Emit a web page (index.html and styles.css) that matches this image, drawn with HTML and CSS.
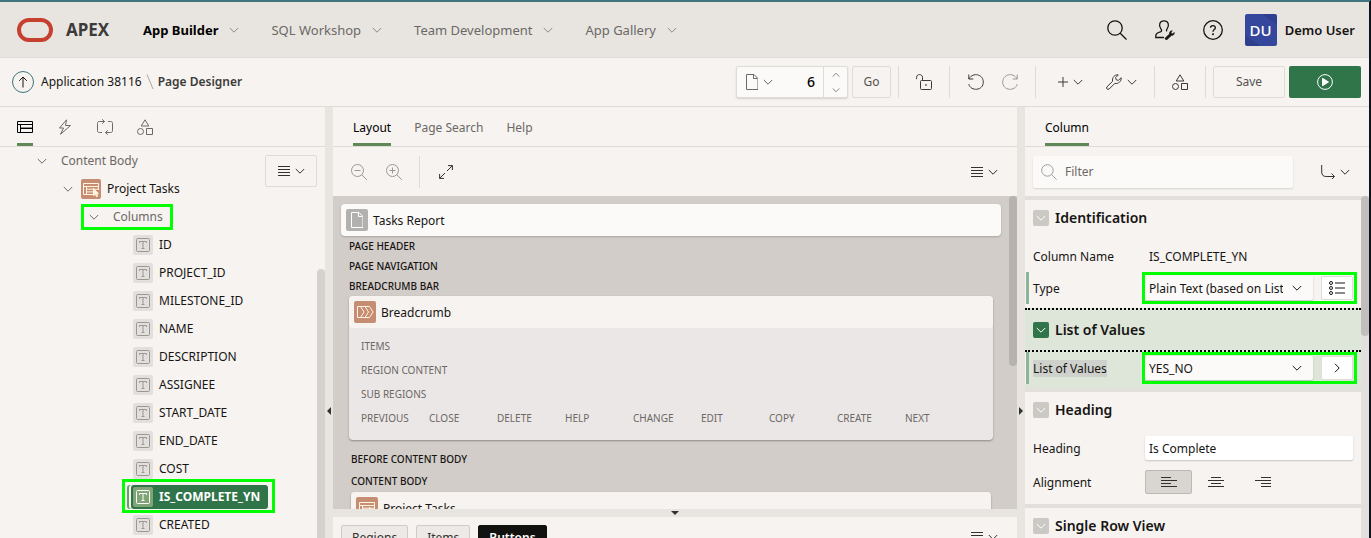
FILE: index.html
```html
<!DOCTYPE html>
<html lang="en">
<head>
<meta charset="utf-8">
<title>Page Designer</title>
<link rel="stylesheet" href="styles.css">
</head>
<body>
<svg class="defs" width="0" height="0" aria-hidden="true">
  <symbol id="chev" viewBox="0 0 10 10"><path d="M.8 3 5 7.200 9.200 3"/></symbol>
  <symbol id="menu" viewBox="0 0 12 12"><path d="M0 1.500h12M0 4.500h12M0 7.500h12M0 10.500h12"/></symbol>
  <symbol id="search" viewBox="0 0 20 20"><circle cx="8" cy="8" r="7.200"/><path d="m13.200 13.200 6.300 6.300"/></symbol>
  <symbol id="shapes" viewBox="0 0 16 16"><path d="M8 .8 11.800 7H4.200zM9.500 9.500h6v6h-6z"/><circle cx="3.500" cy="12.500" r="3"/></symbol>
  <symbol id="page" viewBox="0 0 12 16"><path d="M.5.5h7.500l4 4v11H.5zM7.500.5v4h4"/></symbol>
  <symbol id="text" viewBox="0 0 20 20"><rect x="3.500" y="3.500" width="13" height="13" rx="1"/><path d="M6.500 8V6.500h7V8M10 6.500v7M8.500 13.500h3"/></symbol>
  <symbol id="report" viewBox="0 0 20 20"><path d="M17.500 11V4.500h-15v11H13M2.500 7.500h15M5.500 7.500v8M5.500 10.200h12M5.500 12.900h7.500"/><path class="solid" d="m12.500 9.500 5 5.200-2 .2 1 2.300-1 .5-1.100-2.400-1.900 1.200z"/></symbol>
</svg>

<header class="topbar">
  <a class="brand" href="#"><svg width="36" height="24" viewBox="0 0 36 24"><rect x="2" y="2" width="32" height="20" rx="10" fill="none" stroke="#c73f2e" stroke-width="4"/></svg><span>APEX</span></a>
  <nav class="mainnav">
    <a class="current" href="#">App Builder<svg class="i chev"><use href="#chev"/></svg></a>
    <a href="#">SQL Workshop<svg class="i chev"><use href="#chev"/></svg></a>
    <a href="#">Team Development<svg class="i chev"><use href="#chev"/></svg></a>
    <a href="#">App Gallery<svg class="i chev"><use href="#chev"/></svg></a>
  </nav>
  <div class="tools">
    <button aria-label="Search"><svg class="i s20"><use href="#search"/></svg></button>
    <button aria-label="Administration"><svg class="i s20" viewBox="0 0 20 20"><path d="M9 17.500H.8v-2c.2-2 2-3 4.700-3.700 1.600-.5 1.300-1.800.4-2.900C3.300 5.500 4.500.9 9 .9s5.700 4.600 3.100 8c-.8 1-.9 1.900 0 2.400"/><path class="wrench" d="m10.200 18 4.300-4.100c-.4-1.800 1-3.400 2.800-3.100l-1.200 1.400.4 1.300 1.300.3 1.400-1.400c.6 1.700-1.100 3.400-2.800 3l-4.200 4.100c-1.300.7-2.700-.6-2-1.500z"/></svg></button>
    <button aria-label="Help"><svg class="i s20" viewBox="0 0 20 20"><circle cx="10" cy="10" r="9.300"/><path d="M7.500 7.800C7.600 4.800 12.500 5 12.400 7.900c-.1 1.700-2.400 1.700-2.400 3.900"/><circle class="solid" cx="10" cy="14.200" r=".4"/></svg></button>
    <button class="user"><span class="avatar">DU</span>Demo User</button>
  </div>
</header>

<div class="toolbar">
  <nav class="crumbs">
    <a class="up" href="#" aria-label="Up"><svg class="i s12" viewBox="0 0 12 12"><path d="M6 11.500V1M2.200 4.800 6 1l3.800 3.800"/></svg></a>
    <a href="#">Application 38116</a>
    <svg class="i slash" viewBox="0 0 8 16"><path d="m1 .5 6 14.500"/></svg>
    <strong>Page Designer</strong>
  </nav>
  <div class="pagepick">
    <button class="pick" aria-label="Choose page"><svg class="i page"><use href="#page"/></svg><svg class="i s10"><use href="#chev"/></svg></button>
    <input aria-label="Page" value="6">
    <span class="spin"><button aria-label="Next page"><svg class="i flip"><use href="#chev"/></svg></button><button aria-label="Previous page"><svg class="i"><use href="#chev"/></svg></button></span>
  </div>
  <button class="box go">Go</button>
  <div class="grp lock"><button aria-label="Unlocked"><svg class="i s16" viewBox="0 0 16 16"><rect x="4.500" y="6.500" width="11" height="9" rx="1"/><path d="M6.500 6.500V3.200C6.300-.3.600-.3.600 3.200v2"/><circle class="solid" cx="10" cy="11" r=".4"/></svg></button></div>
  <div class="grp undo"><button aria-label="Undo"><svg class="i s16" viewBox="0 0 16 16"><path d="M.8.500v4.500h4.500M1 4.800C5-2.200 15.300.2 15.300 8.100c0 8.800-12.600 9.600-14.500 2"/></svg></button><button class="off" aria-label="Redo"><svg class="i s16" viewBox="0 0 16 16"><path d="M15.200.500v4.500h-4.500M15 4.800C11-2.200.7.2.7 8.100c0 8.800 12.600 9.600 14.500 2"/></svg></button></div>
  <div class="grp make"><button aria-label="Create"><svg class="i s10" viewBox="0 0 10 10"><path d="M5 0v10M0 5h10"/></svg><svg class="i s10"><use href="#chev"/></svg></button><button aria-label="Utilities"><svg class="i s16" viewBox="0 0 16 16"><path d="M.9 12.900 6.600 7.300C5.800 3.800 8.700.3 12.300.9L9.600 3.600l.6 2.200 2.200.6L15.100 3.700c.6 3.600-2.800 6.400-6.300 5.700l-5.700 5.700c-1.600 1-3.200-.7-2.200-2.200z"/></svg><svg class="i s10"><use href="#chev"/></svg></button></div>
  <div class="grp comp"><button aria-label="Shared Components"><svg class="i s16"><use href="#shapes"/></svg></button></div>
  <div class="grp save"><button class="box">Save</button><button class="run" aria-label="Save and run page"><svg class="i s16" viewBox="0 0 16 16"><circle cx="8" cy="8" r="7.400"/><path class="solid" d="M5.500 4.300 11.500 8l-6 3.700z"/></svg></button></div>
</div>

<main class="workspace">
  <section class="pane left">
    <div class="tabs icons" role="tablist">
      <button class="tab on" role="tab" aria-label="Rendering"><svg class="i s16" viewBox="0 0 16 16"><path d="M.5 2.500h15v11H.5zM.5 5.500h15M3.500 5.500v8M3.500 9.500h12"/><path stroke="#888" d="M4 8.500h11"/></svg></button>
      <button class="tab" role="tab" aria-label="Dynamic Actions"><svg class="i s16" viewBox="0 0 16 16"><path d="M9.500.8 2.500 9h4l-3 6.300L13.500 6.500h-5z"/></svg></button>
      <button class="tab" role="tab" aria-label="Processing"><svg class="i s16" viewBox="0 0 16 16"><path d="M7.500 2.500h-5c-1.500 0-2 .5-2 2v7c0 1.500.5 2 2 2H5M5.200.3l2.300 2.200-2.300 2.200M8.500 13.500h5c1.500 0 2-.5 2-2v-7c0-1.500-.5-2-2-2H11M10.800 11.300l-2.300 2.200 2.300 2.200"/></svg></button>
      <button class="tab" role="tab" aria-label="Shared Components"><svg class="i s16"><use href="#shapes"/></svg></button>
    </div>
    <div class="treewrap">
      <ul class="tree">
        <li class="l1 dim"><svg class="i s10"><use href="#chev"/></svg>Content Body</li>
        <li class="l2"><svg class="i s10"><use href="#chev"/></svg><svg class="i tile rust"><use href="#report"/></svg>Project Tasks</li>
        <li class="l3 dim"><svg class="i s10"><use href="#chev"/></svg><span>Columns</span><i class="mark"></i></li>
        <li class="l4"><svg class="i tile"><use href="#text"/></svg>ID</li>
        <li class="l4"><svg class="i tile"><use href="#text"/></svg>PROJECT_ID</li>
        <li class="l4"><svg class="i tile"><use href="#text"/></svg>MILESTONE_ID</li>
        <li class="l4"><svg class="i tile"><use href="#text"/></svg>NAME</li>
        <li class="l4"><svg class="i tile"><use href="#text"/></svg>DESCRIPTION</li>
        <li class="l4"><svg class="i tile"><use href="#text"/></svg>ASSIGNEE</li>
        <li class="l4"><svg class="i tile"><use href="#text"/></svg>START_DATE</li>
        <li class="l4"><svg class="i tile"><use href="#text"/></svg>END_DATE</li>
        <li class="l4"><svg class="i tile"><use href="#text"/></svg>COST</li>
        <li class="l4 sel"><span class="pill"><svg class="i tile"><use href="#text"/></svg>IS_COMPLETE_YN</span><i class="mark"></i></li>
        <li class="l4"><svg class="i tile"><use href="#text"/></svg>CREATED</li>
      </ul>
      <button class="box treemenu" aria-label="Tree menu"><svg class="i s12"><use href="#menu"/></svg><svg class="i s10"><use href="#chev"/></svg></button>
      <div class="thumb"></div>
    </div>
  </section>

  <div class="split"><svg class="grip" width="4" height="8" viewBox="0 0 4 8"><path d="M4 0v8L0 4z"/></svg></div>

  <section class="pane center">
    <div class="tabs" role="tablist">
      <button class="tab on" role="tab">Layout</button><button class="tab" role="tab">Page Search</button><button class="tab" role="tab">Help</button>
    </div>
    <div class="subbar">
      <button class="off" aria-label="Zoom out"><svg class="i s16" viewBox="0 0 16 16"><circle cx="6.500" cy="6.500" r="6"/><path d="m10.800 10.800 5 5M3.500 6.500h6"/></svg></button>
      <button class="off" aria-label="Zoom in"><svg class="i s16" viewBox="0 0 16 16"><circle cx="6.500" cy="6.500" r="6"/><path d="m10.800 10.800 5 5M3.500 6.500h6M6.500 3.500v6"/></svg></button>
      <span class="rule"></span>
      <button aria-label="Expand"><svg class="i s14" viewBox="0 0 14 14"><path d="M9 .6h4.400V5M13.400.6 8 6M5 13.400H.6V9M.6 13.400 6 8"/></svg></button>
      <button class="last" aria-label="Layout menu"><svg class="i s12"><use href="#menu"/></svg><svg class="i s10"><use href="#chev"/></svg></button>
    </div>
    <div class="canvas">
      <div class="card"><svg class="i badge grey" viewBox="-5 -3 22 22"><use href="#page" width="12" height="16"/></svg><span>Tasks Report</span></div>
      <div class="pos">
        <h3>PAGE HEADER</h3><h3>PAGE NAVIGATION</h3><h3>BREADCRUMB BAR</h3>
        <article class="region">
          <div class="rhead"><svg class="i badge rust" viewBox="0 0 22 22"><path d="M3.500 5.500h12l3.500 5.500-3.500 5.500h-12zM6.500 5.500 10 11l-3.500 5.500M11 5.500l3.500 5.500-3.500 5.500"/></svg><span>Breadcrumb</span></div>
          <div class="rbody">
            <p>ITEMS</p><p>REGION CONTENT</p><p>SUB REGIONS</p>
            <div class="slots"><span>PREVIOUS</span><span>CLOSE</span><span>DELETE</span><span>HELP</span><span>CHANGE</span><span>EDIT</span><span>COPY</span><span>CREATE</span><span>NEXT</span></div>
          </div>
        </article>
        <div class="content">
          <h3>BEFORE CONTENT BODY</h3><h3>CONTENT BODY</h3>
          <article class="region"><div class="rhead"><svg class="i badge rust" viewBox="-1 -1 22 22"><use href="#report" width="20" height="20"/></svg><span>Project Tasks</span></div></article>
        </div>
      </div>
      <div class="thumb"></div>
    </div>
    <div class="hsplit"><svg class="grip" width="8" height="4" viewBox="0 0 8 4"><path d="M0 0h8L4 4z"/></svg></div>
    <div class="gallery">
      <button>Regions</button><button>Items</button><button class="on">Buttons</button>
      <button class="plain last" aria-label="Gallery menu"><svg class="i s12"><use href="#menu"/></svg><svg class="i s10"><use href="#chev"/></svg></button>
    </div>
  </section>

  <div class="split"><svg class="grip" width="4" height="8" viewBox="0 0 4 8"><path d="M0 0v8l4-4z"/></svg></div>

  <section class="pane right">
    <div class="tabs" role="tablist"><button class="tab on" role="tab">Column</button></div>
    <div class="subbar">
      <label class="filter"><svg class="i s16" viewBox="0 0 20 20"><use href="#search"/></svg><input type="text" placeholder="Filter" aria-label="Filter"></label>
      <button class="last" aria-label="Go to group"><svg class="i s14" viewBox="0 0 14 14"><path d="M.7 0v7c0 3 1.500 4.500 4.500 4.500h8M10.500 8.500l3 3-3 3"/></svg><svg class="i s10"><use href="#chev"/></svg></button>
    </div>
    <div class="props">
      <div class="groups">
        <section class="group">
          <h2><button aria-label="Toggle Identification"><svg class="i s10"><use href="#chev"/></svg></button>Identification</h2>
          <div class="fields">
            <div class="field"><span>Column Name</span><span class="value">IS_COMPLETE_YN</span></div>
            <div class="field changed"><label for="type">Type</label><div class="control marked"><select id="type"><option>Plain Text (based on List of Values)</option></select><svg class="i s10 arrow"><use href="#chev"/></svg><button aria-label="Quick pick"><svg class="i s16" viewBox="0 0 16 14"><circle cx="2" cy="2" r="1.500"/><circle cx="2" cy="7" r="1.500"/><circle cx="2" cy="12" r="1.500"/><path d="M6 2h10M6 7h10M6 12h10"/></svg></button></div></div>
          </div>
        </section>
        <section class="group active">
          <h2><button aria-label="Toggle List of Values"><svg class="i s10"><use href="#chev"/></svg></button>List of Values</h2>
          <div class="fields">
            <div class="field changed"><label for="lov"><mark>List of Values</mark></label><div class="control marked"><select id="lov"><option>YES_NO</option></select><svg class="i s10 arrow"><use href="#chev"/></svg><button aria-label="Go to List of Values"><svg class="i s10" viewBox="0 0 10 10"><path d="m3 .8 4.200 4.200L3 9.200"/></svg></button></div></div>
          </div>
        </section>
        <section class="group">
          <h2><button aria-label="Toggle Heading"><svg class="i s10"><use href="#chev"/></svg></button>Heading</h2>
          <div class="fields roomy">
            <div class="field"><label for="heading">Heading</label><div class="control"><input id="heading" value="Is Complete"></div></div>
            <div class="field"><span>Alignment</span><div class="align"><button class="on" aria-label="Start"><svg class="i s16" viewBox="0 0 16 12"><path d="M0 1.500h10M0 4.500h16M0 7.500h10M0 10.500h16"/></svg></button><button aria-label="Center"><svg class="i s16" viewBox="0 0 16 12"><path d="M3 1.500h10M0 4.500h16M3 7.500h10M0 10.500h16"/></svg></button><button aria-label="End"><svg class="i s16" viewBox="0 0 16 12"><path d="M6 1.500h10M0 4.500h16M6 7.500h10M6 10.500h10"/></svg></button></div></div>
          </div>
        </section>
        <section class="group">
          <h2><button aria-label="Toggle Single Row View"><svg class="i s10"><use href="#chev"/></svg></button>Single Row View</h2>
        </section>
      </div>
      <div class="thumb"></div>
    </div>
  </section>
</main>
</body>
</html>
```
FILE: styles.css
```css
* { box-sizing: border-box; }
body {
  margin: 0;
  height: 100vh;
  overflow: hidden;
  display: flex;
  flex-direction: column;
  border-top: 2px solid #41757f;
  border-right: 2px solid #10121c;
  background: #f6f3f0;
  color: #161513;
  font: 12px/16px "Noto Sans", "Open Sans", sans-serif;
}
button, input, select { font: inherit; color: inherit; }
button { border: 0; padding: 0; background: none; display: inline-flex; align-items: center; justify-content: center; gap: 5px; }
a { color: inherit; text-decoration: none; }
h2, h3, p, ul { margin: 0; padding: 0; }
.defs { position: absolute; }
.i { width: 10px; height: 10px; flex: none; fill: none; stroke: currentColor; stroke-width: 1; }
.i .solid, .solid { fill: currentColor; }
.wrench { fill: currentColor; stroke-width: 0.6; }
.s10 { width: 10px; height: 10px; }
.s12 { width: 12px; height: 12px; }
.s14 { width: 14px; height: 14px; }
.s16 { width: 16px; height: 16px; }
.s20 { width: 20px; height: 20px; }
.last { margin-left: auto; }
.off { color: #9b9894; }

.topbar { height: 56px; flex: none; display: flex; align-items: center; padding: 0 14px 0 17px; background: #e8e5e1; border-bottom: 1px solid #dfdbd7; }
.brand { display: flex; align-items: center; gap: 13px; width: 126px; font-size: 17px; font-weight: 700; color: #3d3b39; }
.mainnav { display: flex; gap: 32px; font-size: 13px; color: #6b6865; }
.mainnav a { display: flex; align-items: center; gap: 11px; }
.mainnav .current { font-weight: 700; color: #000; }
.mainnav .chev { color: #8b8884; }
.tools { margin-left: auto; display: flex; align-items: center; gap: 28px; }
.tools .s20 { stroke-width: 1.3; }
.user { gap: 8px; margin-left: -6px; font-size: 13px; font-weight: 600; }
.avatar { width: 32px; height: 32px; border-radius: 2px; background: linear-gradient(35deg, #2f3f8c 20%, #35479c 21%, #35479c 80%, #2f3f8f 81%); color: #fff; font-size: 15px; font-weight: 500; line-height: 32px; }

.toolbar { height: 49px; flex: none; display: flex; align-items: center; padding: 0 8px 0 12px; border-bottom: 1px solid #dfdbd7; color: #3d3b39; }
.toolbar button, .box { height: 32px; }
.crumbs { display: flex; align-items: center; gap: 4px; margin-right: auto; color: #161513; }
.crumbs strong { color: #3d3b39; font-weight: 600; }
.up { width: 22px; height: 22px; margin-right: 3px; border: 1px solid #41757f; border-radius: 50%; display: grid; place-items: center; }
.slash { width: 8px; height: 16px; color: #aaa7a3; }
.box { border: 1px solid #dfdcd8; border-radius: 2px; color: #55524f; }
.pagepick { width: 112px; height: 32px; display: flex; background: #fbfaf8; border: 1px solid #dfdcd8; border-radius: 2px; box-shadow: 0 1px 2px #0002; }
.pagepick .pick { width: 44px; height: 30px; color: #6b6865; }
.page { width: 12px; height: 16px; }
.pagepick input { flex: 1; min-width: 0; border: 0; background: none; text-align: right; padding: 0 8px 0 0; font-size: 14px; font-weight: 500; color: #000; }
.spin { width: 24px; display: flex; flex-direction: column; border-left: 1px solid #dfdcd8; }
.spin button { height: 15px; color: #6b6865; }
.spin .i { width: 8px; height: 8px; }
.flip { transform: rotate(180deg); }
.go { width: 39px; margin: 0 7px 0 4px; }
.grp { height: 32px; display: flex; align-items: center; justify-content: center; border-left: 1px solid #dfdcd8; }
.lock { width: 51px; }
.undo { width: 86px; gap: 18px; }
.make { width: 119px; gap: 23px; padding-left: 4px; }
.comp { width: 51px; }
.save { gap: 4px; padding-left: 7px; }
.save .box, .save .run { width: 72px; }
.run { background: #30744a; color: #fff; border-radius: 2px; }

.workspace { flex: 1; min-height: 0; display: grid; grid-template-columns: 325px 8px minmax(0, 1fr) 8px 344px; }
.pane { min-width: 0; min-height: 0; display: flex; flex-direction: column; }
.split, .hsplit { background: #e8e5e1; display: grid; place-items: center; }
.split { padding-top: 300px; align-content: start; }
.hsplit { height: 8px; flex: none; align-content: start; padding-top: 2px; }
.grip { fill: #33312f; display: block; }
.thumb { position: absolute; top: 0; right: 0; width: 8px; border-radius: 4px; background: #b7b2ae; }

.tabs { height: 40px; flex: none; display: flex; gap: 23px; padding: 0 20px; border-bottom: 1px solid #dfdbd7; }
.tab { color: #6b6865; border-bottom: 3px solid transparent; padding-top: 5px; }
.tab.on { color: #000; border-color: #5f8758; }

.treewrap { position: relative; flex: 1; min-height: 0; overflow: hidden; }
.icons { gap: 24px; padding: 0 17px; }
.icons .tab { padding-top: 3px; }
.tree { list-style: none; }
.tree li { height: 28px; display: flex; align-items: center; position: relative; }
.tree .s10 { color: #6b6865; }
.dim { color: #6b6865; }
.l1 { padding-left: 37px; gap: 14px; }
.l2 { padding-left: 63px; gap: 6px; }
.l2 .s10 { margin-right: 2px; }
.l3 { padding-left: 89px; gap: 14px; }
.l4 { padding-left: 133px; gap: 6px; }
.tile { width: 20px; height: 20px; background: #e3dfdc; color: #9b9894; border-radius: 2px; }
.rust { background: #c78d72; color: #fff5e0; }
.l3 .mark, .l4 .mark { position: absolute; border: 3px solid #00ff00; }
.l3 .mark { left: 81px; top: 1px; width: 92px; height: 26px; }
.l4 .mark { left: 122px; top: -4px; width: 153px; height: 34px; }
.sel .pill { display: flex; align-items: center; gap: 6px; height: 24px; margin-left: -2px; padding: 0 8px 0 2px; border-radius: 3px; background: #30744a; color: #fff; font-weight: 700; box-shadow: -2px 0 #f6f3f0, -4px 0 #6c9a68; }
.sel .tile { background: #7fa475; color: #fff; }
.treemenu { position: absolute; right: 8px; top: 8px; width: 52px; color: #33312f; }
.treewrap .thumb { top: 122px; bottom: -8px; background: #d5d1ce; }

.subbar { height: 49px; flex: none; display: flex; align-items: center; padding: 0 19px 0 18px; color: #33312f; }
.subbar .off + .off { margin-left: 19px; }
.rule { width: 1px; height: 32px; background: #dfdcd8; margin: 0 19px 0 17px; }
.canvas { position: relative; flex: 1; min-height: 0; overflow: hidden; background: #d3cdc9; padding: 8px 16px 0 8px; }
.canvas > .thumb { height: 170px; }
.card, .rhead { height: 32px; display: flex; align-items: center; gap: 5px; padding-left: 5px; border-radius: 4px; }
.card span, .rhead span { padding-top: 2px; }
.card { background: #fbfaf8; box-shadow: 0 1px 2px #0003; }
.badge { width: 22px; height: 22px; border-radius: 2px; }
.grey { background: #b3b1af; color: #fff; }
.pos { padding: 0 8px; }
h3 { font-size: 10px; line-height: 20px; font-weight: 500; }
.region { border-radius: 4px; background: #ebe7e6; box-shadow: 0 1px 2px #0005; }
.rhead { background: #f6f3f0; }
.rbody { padding: 6px 12px 10px; font-size: 10px; line-height: 24px; color: #6b6865; }
.slots { display: flex; }
.slots span { width: 68px; }
.content { padding: 8px 2px 0; }
.content h3 { line-height: 22px; }

.gallery { height: 21px; flex: none; overflow: hidden; display: flex; align-items: flex-start; gap: 8px; padding: 8px 19px 0 8px; }
.gallery button { height: 24px; flex: none; padding: 1px 10px 0; border: 1px solid #cfcbc7; border-radius: 2px; background: #ece9e6; color: #33312f; }
.gallery .on { background: #11110f; border-color: #11110f; color: #fff; font-weight: 600; }
.gallery .plain { border: 0; padding: 0; background: none; }

.right .subbar { padding-left: 8px; }
.filter { width: 260px; height: 32px; display: flex; align-items: center; gap: 8px; padding: 0 8px; background: #fbfaf8; border-radius: 2px; box-shadow: 0 1px 2px #0002; color: #8b8884; }
.filter input { flex: 1; min-width: 0; border: 0; background: none; padding: 0; outline: 0; }
.filter input::placeholder { color: #6b6865; opacity: 1; }
.props { position: relative; flex: 1; min-height: 0; overflow: hidden; padding: 4px 8px 0 0; background: #e3dfdc; }
.props > .thumb { height: 140px; background: #c2bebb; }
.group { background: #f6f3f0; margin-bottom: 4px; }
.group:has(+ .active) { margin-bottom: 0; }
h2 { height: 36px; display: flex; align-items: center; gap: 6px; padding-left: 8px; font-size: 14px; line-height: 20px; font-weight: 600; }
h2 button { width: 16px; height: 16px; background: #ccc8c4; color: #fff; border-radius: 2px; }
.active { background: #dee5d9; }
.active h2 { height: 44px; border-top: 2px dotted #000; border-bottom: 2px dotted #000; }
.active h2 button { background: #30744a; }
.fields { padding: 4px 0; }
.active .fields { padding-top: 0; }
.roomy { display: grid; gap: 2px; padding-bottom: 6px; }
.field { height: 32px; display: grid; grid-template-columns: 112px minmax(0, 1fr); align-items: center; padding: 0 8px; }
.field > span, .field > label { padding-top: 2px; }
.changed { box-shadow: inset 1px 0 #f6f3f0, inset 4px 0 #8db39a; }
.field > .value { padding-left: 4px; }
mark { background: #cfd1cc; color: inherit; }
.control { position: relative; display: flex; gap: 8px; height: 24px; }
.control select, .control input { flex: 1; min-width: 0; border: 0; border-radius: 2px; padding: 2px 30px 0 4px; background: #fbfaf8; box-shadow: 0 1px 2px #0003; appearance: none; }
.control input { background: #fff; }
.arrow { position: absolute; right: 51px; top: 7px; }
.control button { width: 32px; background: #fff; border: 1px solid #dfdcd8; border-radius: 2px; }
.marked::after { content: ""; position: absolute; inset: -4px -4px -4px -3px; border: 3px solid #00ff00; pointer-events: none; }
.align { display: flex; }
.align button { width: 47px; height: 24px; color: #33312f; }
.align .on { background: #d9d5d1; border: 1px solid #bdb9b5; border-radius: 2px; }
```
